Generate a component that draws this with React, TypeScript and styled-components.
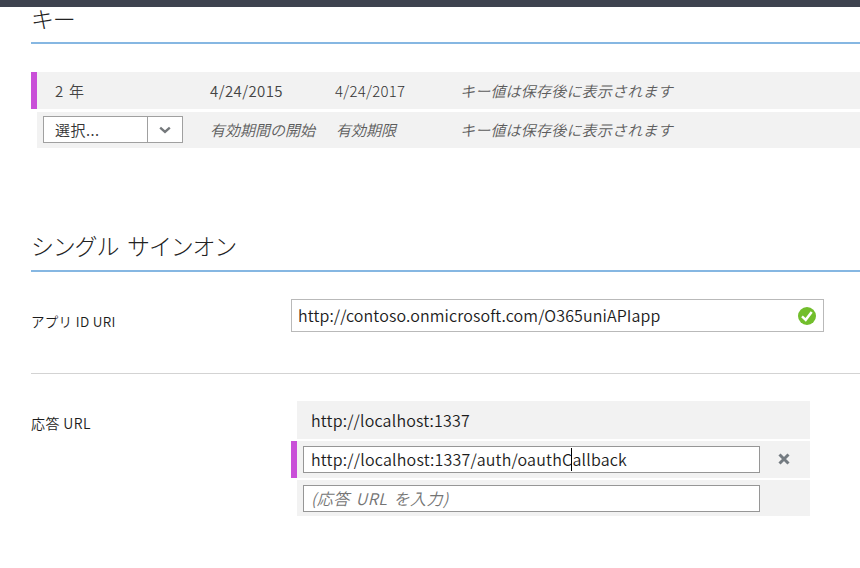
import React from "react";
import styled, { createGlobalStyle } from "styled-components";

const GlobalStyle = createGlobalStyle`
  *, *::before, *::after { box-sizing: border-box; }
  body {
    margin: 0;
    background: #fff;
    overflow: hidden;
    font-family: "Noto Sans CJK JP", sans-serif;
    font-weight: 300;
    color: #222;
  }
`;

const Page = styled.main`
  width: 860px;
  height: 568px;
  overflow: hidden;
`;

const TopBar = styled.div`
  height: 7px;
  background: #3e434f;
`;

const Content = styled.div`
  display: flex;
  flex-direction: column;
  padding-left: 31px;
`;

const Heading = styled.h2<{ $height: number; $lift?: number }>`
  display: flex;
  align-items: flex-end;
  height: ${(p) => p.$height}px;
  margin: 0;
  padding-bottom: ${(p) => 12 + (p.$lift ?? 0)}px;
  border-bottom: 2px solid #86b7e2;
  font-size: 23px;
  font-weight: 300;
  line-height: 24px;
  letter-spacing: -1.2px;
  word-spacing: 5px;
  white-space: pre;
`;

const Text = styled.span<{
  $size?: number;
  $spacing?: number;
  $gap?: number;
  $color?: string;
  $italic?: boolean;
  $weight?: number;
}>`
  display: block;
  font-size: ${(p) => p.$size ?? 15}px;
  line-height: 20px;
  letter-spacing: ${(p) => p.$spacing ?? 0}px;
  word-spacing: ${(p) => p.$gap ?? 0}px;
  color: ${(p) => p.$color ?? "#1c1c1c"};
  font-style: ${(p) => (p.$italic ? "italic" : "normal")};
  font-weight: ${(p) => p.$weight ?? 350};
  white-space: pre;
`;

const KeyTable = styled.section`
  display: grid;
  grid-template-rows: 37px 36px;
  row-gap: 3px;
  margin-top: 28px;
`;

const KeyRow = styled.div<{ $changed?: boolean }>`
  display: grid;
  grid-template-columns: 173px 125px 125px 1fr;
  align-items: center;
  border-left: 6px solid ${(p) => (p.$changed ? "#c94fd8" : "#fff")};
  background: #f2f2f2;
`;

const Cell = styled.div<{ $indent?: number; $top?: number }>`
  padding-left: ${(p) => p.$indent ?? 0}px;
  padding-top: ${(p) => p.$top ?? 1}px;
`;

const Select = styled.div`
  display: grid;
  grid-template-columns: 103px 35px;
  width: 140px;
  height: 27px;
  margin: -2px 0 0 6px;
  border: 1px solid #a0a0a0;
  background: #fff;
`;

const SelectValue = styled.div`
  display: flex;
  align-items: center;
  padding: 2px 0 0 11px;
`;

const SelectArrow = styled.div`
  display: flex;
  align-items: center;
  justify-content: center;
  padding-top: 2px;
  border-left: 1px solid #a0a0a0;
`;

const Field = styled.section<{ $height: number; $top: number; $divided?: boolean }>`
  display: grid;
  grid-template-columns: 260px 1fr;
  align-items: start;
  height: ${(p) => p.$height}px;
  padding-top: ${(p) => p.$top}px;
  border-bottom: ${(p) => (p.$divided ? "1px solid #d3d3d3" : "0")};
`;

const Label = styled.label`
  padding-top: 12px;
`;

const UriInput = styled.div`
  display: flex;
  align-items: center;
  justify-content: space-between;
  width: 533px;
  height: 33px;
  padding: 0 6px 2px;
  border: 1px solid #b9b9b9;
`;

const ValidIcon = styled.svg`
  margin-top: 2px;
`;

const UrlList = styled.div`
  display: grid;
  grid-template-rows: 38px 37px 36px;
  row-gap: 2px;
  width: 519px;
`;

const UrlRow = styled.div<{ $changed?: boolean }>`
  display: flex;
  align-items: center;
  padding-left: 6px;
  border-left: 6px solid ${(p) => (p.$changed ? "#c94fd8" : "#fff")};
  background: #f2f2f2;
`;

const UrlBox = styled.div<{ $plain?: boolean; $editing?: boolean }>`
  display: flex;
  align-items: center;
  width: 457px;
  height: 27px;
  padding: 0 0 ${(p) => (p.$editing ? 2 : 0)}px 7px;
  border: 1px solid ${(p) => (p.$plain ? "transparent" : "#969696")};
  background: ${(p) => (p.$plain ? "transparent" : "#fff")};
`;

const Caret = styled.i`
  width: 1px;
  height: 23px;
  margin: 2px 0 0 -1px;
  background: #000;
`;

const RemoveIcon = styled.svg`
  margin: 0 0 1px 18px;
`;

const hint = "#5c5c5c";

export default function App() {
  return (
    <Page>
      <GlobalStyle />
      <TopBar />
      <Content>
        <Heading $height={37}>キー</Heading>
        <KeyTable>
          <KeyRow $changed>
            <Cell $indent={18}><Text $color="#444" $gap={2} $spacing={0.2}>2 年</Text></Cell>
            <Cell><Text $color="#444" $spacing={0.4}>4/24/2015</Text></Cell>
            <Cell><Text $color="#333" $weight={300} $spacing={0.25}>4/24/2017</Text></Cell>
            <Cell><Text $italic $color={hint} $spacing={0.2}>キー値は保存後に表示されます</Text></Cell>
          </KeyRow>
          <KeyRow>
            <Select>
              <SelectValue><Text $color="#333" $spacing={0.5}>選択...</Text></SelectValue>
              <SelectArrow>
                <svg width="12" height="8" viewBox="0 0 12 8">
                  <path d="M1.2 1.6 L6 5.8 L10.8 1.6" fill="none" stroke="#74787b" strokeWidth="2.4" />
                </svg>
              </SelectArrow>
            </Select>
            <Cell $top={0}><Text $italic $color={hint}>有効期間の開始</Text></Cell>
            <Cell $indent={1} $top={0}><Text $italic $color={hint}>有効期限</Text></Cell>
            <Cell $top={0}><Text $italic $color={hint} $spacing={0.2}>キー値は保存後に表示されます</Text></Cell>
          </KeyRow>
        </KeyTable>
        <Heading $height={124} $lift={1}>シングル サインオン</Heading>
        <Field $height={102} $top={27} $divided>
          <Label><Text $size={13.5} $spacing={0.3}>アプリ ID URI</Text></Label>
          <UriInput>
            <Text $size={16} $spacing={0.11}>http://contoso.onmicrosoft.com/O365uniAPIapp</Text>
            <ValidIcon width="20" height="20" viewBox="0 0 20 20">
              <circle cx="10" cy="10" r="9" fill="#72be2c" />
              <path d="M5 10.3 L8.7 13.8 L14.7 6" fill="none" stroke="#fff" strokeWidth="2.5" />
            </ValidIcon>
          </UriInput>
        </Field>
        <Field $height={170} $top={27}>
          <Label><Text $size={14} $spacing={0.4}>応答 URL</Text></Label>
          <UrlList>
            <UrlRow>
              <UrlBox $plain><Text $size={16} $spacing={0.18}>http://localhost:1337</Text></UrlBox>
            </UrlRow>
            <UrlRow $changed>
              <UrlBox $editing>
                <Text $size={16} $spacing={0.21}>http://localhost:1337/auth/oauthC</Text>
                <Caret />
                <Text $size={16} $spacing={0.21}>allback</Text>
              </UrlBox>
              <RemoveIcon width="12" height="12" viewBox="0 0 12 12">
                <path d="M1.5 1.5 L10.5 10.5 M10.5 1.5 L1.5 10.5" fill="none" stroke="#747b81" strokeWidth="3" />
              </RemoveIcon>
            </UrlRow>
            <UrlRow>
              <UrlBox><Text $size={16} $italic $color="#747474" $spacing={0.5} $gap={2}>(応答 URL を入力)</Text></UrlBox>
            </UrlRow>
          </UrlList>
        </Field>
      </Content>
    </Page>
  );
}
